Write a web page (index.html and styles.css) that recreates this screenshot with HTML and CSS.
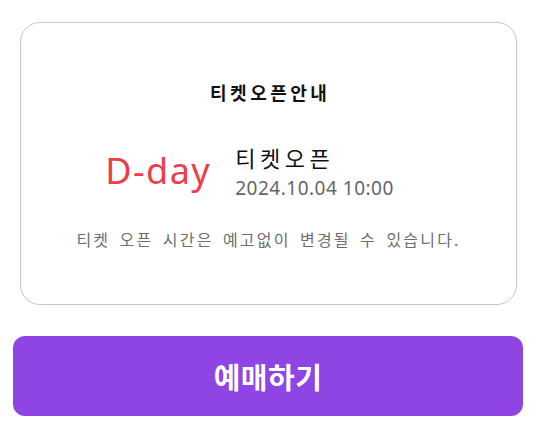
FILE: index.html
```html
<!DOCTYPE html>
<html lang="ko">
<head>
    <meta charset="UTF-8">
    <meta name="viewport" content="width=device-width, initial-scale=1.0">
    <title>티켓오픈안내</title>
    <link rel="stylesheet" href="styles.css">
</head>
<body>

    <!-- 티켓 오픈 안내 카드 -->
    <div class="card">
        <h2 class="card-title">티켓오픈안내</h2>

        <div class="open-row">
            <span class="dday">D-day</span>
            <div class="open-info">
                <span class="open-label">티켓오픈</span>
                <span class="open-date">2024.10.04 10:00</span>
            </div>
        </div>

        <p class="notice">티켓 오픈 시간은 예고없이 변경될 수 있습니다.</p>
    </div>

    <!-- 예매 버튼 -->
    <button class="reserve-btn" type="button">예매하기</button>

</body>
</html>
```

FILE: styles.css
```css
/* 기본 설정 */
body {
    margin: 0;
    padding: 22px 16px 0 13px;
    background-color: #fff;
    font-family: 'Noto Sans', 'Noto Sans CJK KR', sans-serif;
    color: #111;
}

/* 안내 카드 */
.card {
    margin: 0 6px 0 7px;
    height: 283px;
    box-sizing: border-box;
    border: 1px solid #c3c6cc;
    border-radius: 20px;
    display: flex;
    flex-direction: column;
    align-items: center;
    padding-top: 55px;
}

.card-title {
    margin: 0;
    font-size: 18px;
    font-weight: 700;
    line-height: 30px;
    letter-spacing: 3.5px;
    padding-left: 3.5px; /* 자간 보정 */
}

/* D-day 행 */
.open-row {
    display: flex;
    align-items: flex-start;
    gap: 24px;
    margin-top: 35px;
    padding-right: 38px;
}

.dday {
    font-size: 36px;
    color: #ee3d48;
    line-height: 44px;
    letter-spacing: 1.5px;
    margin-top: 6px;
}

.open-info {
    display: flex;
    flex-direction: column;
}

.open-label {
    font-size: 22px;
    line-height: 30px;
    letter-spacing: 4.5px;
}

.open-date {
    font-size: 19px;
    line-height: 30px;
    color: #666;
    letter-spacing: 0.5px;
}

.notice {
    margin: 25px 0 0;
    font-size: 16px;
    color: #6e6e6e;
    line-height: 24px;
    letter-spacing: 2.2px;
    word-spacing: 3px;
}

/* 예매 버튼 */
.reserve-btn {
    display: block;
    width: 100%;
    height: 80px;
    margin-top: 31px;
    border: none;
    border-radius: 12px;
    background-color: #8f45e3;
    color: #fff;
    font-family: inherit;
    font-size: 29px;
    font-weight: 700;
    letter-spacing: 0.5px;
    cursor: pointer;
}
```
